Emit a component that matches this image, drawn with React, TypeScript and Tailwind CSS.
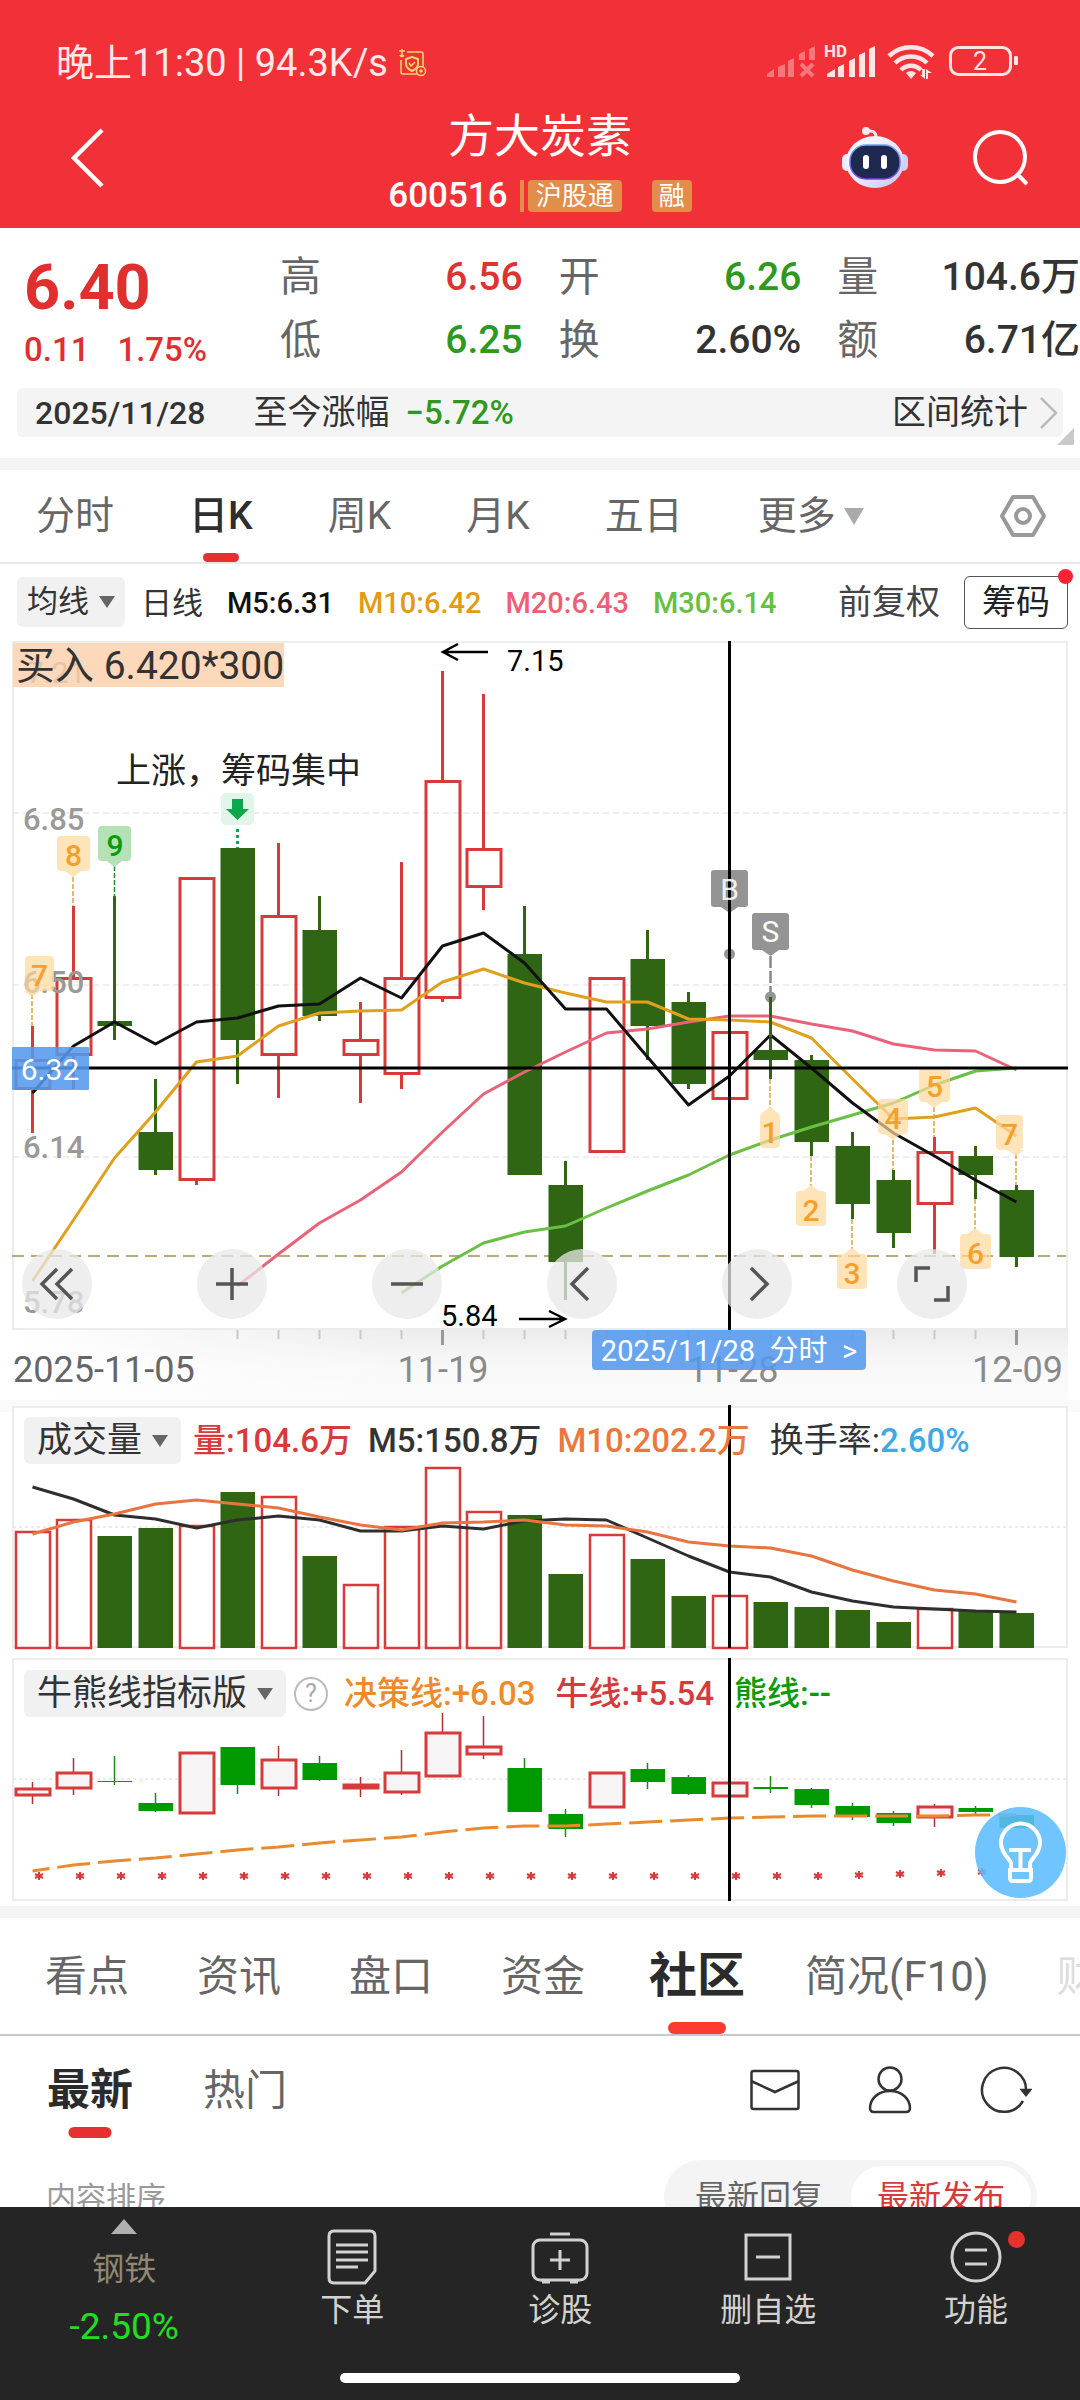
import React from "react";

const RED = "#d63a3a";
const GREEN = "#306613";
const LIME = "#009a00";

const cx = (i: number) => 32.5 + 41 * i;
const points = (ys: number[], from = 0) => ys.map((y, k) => `${cx(from + k)},${y}`).join(" ");

/* rising?, high, body top, body bottom, low */
type Candle = [boolean, number, number, number, number];

const candles: Candle[] = [
  [true, 1026, 1059, 1089, 1133],
  [true, 906, 977, 1055, 1089],
  [false, 896, 1021, 1026, 1040],
  [false, 1079, 1132, 1170, 1175],
  [true, 877, 877, 1180, 1185],
  [false, 848, 848, 1040, 1084],
  [true, 843, 915, 1055, 1098],
  [false, 896, 930, 1016, 1021],
  [true, 1002, 1039, 1055, 1103],
  [true, 862, 977, 1074, 1089],
  [true, 671, 780, 998, 1002],
  [true, 694, 848, 887, 910],
  [false, 906, 954, 1175, 1175],
  [false, 1161, 1185, 1262, 1300],
  [true, 977, 977, 1152, 1152],
  [false, 930, 959, 1026, 1060],
  [false, 992, 1002, 1084, 1089],
  [true, 954, 1031, 1099, 1103],
  [false, 997, 1050, 1060, 1079],
  [false, 1055, 1060, 1142, 1156],
  [false, 1132, 1146, 1204, 1219],
  [false, 1170, 1180, 1233, 1248],
  [true, 1137, 1151, 1204, 1254],
  [false, 1146, 1156, 1175, 1199],
  [false, 1185, 1190, 1257, 1267],
];

const ma5 = [1093, 1046, 1022, 1044, 1022, 1018, 1006, 1004, 978, 998, 946, 933, 963, 1009, 1009, 1057, 1105, 1076, 1035, 1068, 1103, 1133, 1156, 1180, 1202];
const ma10 = [1281, 1220, 1158, 1112, 1062, 1056, 1026, 1013, 1011, 1010, 982, 969, 983, 993, 1002, 1002, 1019, 1020, 1022, 1038, 1079, 1119, 1117, 1108, 1136];
const ma20 = [1286, 1254, 1223, 1200, 1172, 1132, 1094, 1072, 1052, 1033, 1029, 1022, 1016, 1016, 1024, 1031, 1044, 1050, 1051, 1070];
const ma30 = [1293, 1266, 1243, 1232, 1226, 1208, 1191, 1175, 1155, 1140, 1127, 1115, 1103, 1085, 1071, 1068];

const volumeTops = [1531, 1519, 1536, 1528, 1525, 1492, 1496, 1556, 1584, 1526, 1467, 1511, 1515, 1574, 1534, 1559, 1596, 1595, 1602, 1607, 1610, 1622, 1608, 1611, 1613];
const vol5 = [1487, 1499, 1515, 1519, 1528, 1520, 1516, 1520, 1531, 1531, 1526, 1529, 1521, 1519, 1520, 1538, 1556, 1572, 1577, 1592, 1601, 1607, 1609, 1611, 1612];
const vol10 = [1534, 1522, 1514, 1504, 1500, 1504, 1508, 1517, 1525, 1530, 1523, 1522, 1520, 1525, 1526, 1532, 1542, 1546, 1548, 1556, 1570, 1581, 1590, 1594, 1602];

const bullCandles: Candle[] = [
  [true, 1782, 1788, 1796, 1804],
  [true, 1758, 1772, 1789, 1795],
  [false, 1756, 1781, 1782, 1785],
  [false, 1793, 1803, 1811, 1812],
  [true, 1752, 1752, 1814, 1814],
  [false, 1747, 1747, 1785, 1794],
  [true, 1746, 1759, 1789, 1796],
  [false, 1756, 1763, 1780, 1781],
  [true, 1777, 1784, 1789, 1797],
  [true, 1750, 1772, 1793, 1795],
  [true, 1713, 1732, 1777, 1777],
  [true, 1716, 1746, 1755, 1759],
  [false, 1758, 1768, 1812, 1812],
  [false, 1809, 1814, 1829, 1837],
  [true, 1772, 1772, 1808, 1808],
  [false, 1763, 1769, 1782, 1789],
  [false, 1775, 1777, 1794, 1795],
  [true, 1782, 1782, 1797, 1797],
  [false, 1776, 1787, 1789, 1793],
  [false, 1788, 1789, 1805, 1808],
  [false, 1803, 1806, 1817, 1820],
  [false, 1811, 1813, 1823, 1826],
  [true, 1804, 1806, 1818, 1827],
  [false, 1806, 1808, 1812, 1815],
  [false, 1815, 1815, 1828, 1828],
];
const decision = [1871, 1865, 1861, 1858, 1854, 1850, 1847, 1843, 1840, 1837, 1832, 1828, 1826, 1826, 1824, 1822, 1820, 1818, 1817, 1816, 1816, 1816, 1816, 1815, 1815];

/* label, box x, box y, width, arrow direction, guide x, guide start, guide end */
type Tag = [string, number, number, number, "up" | "down", number, number, number];
const tags: Tag[] = [
  ["7", 25, 956, 29, "down", 32, 994, 1026],
  ["8", 57, 836, 33, "down", 73, 877, 906],
  ["1", 760, 1113, 20, "up", 770, 1079, 1108],
  ["2", 796, 1191, 30, "up", 811, 1156, 1186],
  ["3", 837, 1254, 30, "up", 852, 1219, 1249],
  ["4", 878, 1099, 30, "down", 893, 1140, 1170],
  ["5", 919, 1067, 31, "down", 934, 1107, 1137],
  ["6", 960, 1234, 31, "up", 975, 1199, 1229],
  ["7", 996, 1115, 27, "down", 1016, 1154, 1185],
];

function CountTag({ tag }: { tag: Tag }) {
  const [label, x, y, w, dir, gx, y1, y2] = tag;
  const arrow = dir === "down" ? `M${gx - 8} ${y + 35}h16l-8 6z` : `M${gx - 8} ${y}h16l-8 -6z`;
  return (
    <g>
      <line x1={gx} x2={gx} y1={y1} y2={y2} stroke="#d9a73a" strokeWidth="1.5" strokeDasharray="5 2" />
      <g fill="#ffd79b" fillOpacity="0.7">
        <rect x={x} y={y} width={w} height="35" rx="4" />
        <path d={arrow} />
      </g>
      <text x={x + w / 2} y={y + 30} fontSize="30" fontWeight="500" fill="#f5a02b" textAnchor="middle">{label}</text>
    </g>
  );
}

function PriceChart() {
  return (
    <svg viewBox="0 640 1080 760" className="w-full" role="img" aria-label="日K线图">
      <defs>
        <linearGradient id="axisShade" x1="0" x2="0" y1="0" y2="1">
          <stop offset="0" stopColor="#ececec" />
          <stop offset="0.5" stopColor="#f8f8f8" />
          <stop offset="1" stopColor="#fbfbfb" />
        </linearGradient>
        <linearGradient id="axisFade" x1="0" x2="1" y1="0" y2="0">
          <stop offset="0" stopColor="#fff" />
          <stop offset="1" stopColor="#fff" stopOpacity="0" />
        </linearGradient>
      </defs>
      <rect x="12" y="1329" width="1056" height="71" fill="url(#axisShade)" />
      <rect x="12" y="1329" width="400" height="71" fill="url(#axisFade)" />
      <rect x="13" y="642" width="1054" height="687" fill="#fff" stroke="#ececec" strokeWidth="2" />
      {[813, 985, 1157].map((y) => (
        <line key={y} x1="13" x2="1066" y1={y} y2={y} stroke="#dedede" strokeDasharray="6 4" />
      ))}
      <line x1="12" x2="1066" y1="1256" y2="1256" stroke="#bda878" strokeWidth="2" strokeDasharray="12 7" />

      {[5, 6, 7, 8, 9, 11, 12, 13, 14, 15, 16, 17, 18, 19, 20, 21, 22, 23].map((i) => (
        <line key={i} x1={cx(i)} x2={cx(i)} y1="1330" y2="1339" stroke="#c9c9c9" strokeWidth="2" />
      ))}
      {[10, 24].map((i) => (
        <line key={i} x1={cx(i)} x2={cx(i)} y1="1330" y2="1345" stroke="#999" strokeWidth="3" />
      ))}
      <g fontSize="36" fill="#8a8a8a">
        <text x="13" y="1382" fill="#666">2025-11-05</text>
        <text x="443" y="1382" textAnchor="middle">11-19</text>
        <text x="733" y="1382" textAnchor="middle">11-28</text>
        <text x="1063" y="1382" textAnchor="end">12-09</text>
      </g>

      {candles.map(([up, high, top, bottom, low], i) => {
        const x = cx(i);
        return up ? (
          <g key={i} stroke={RED} strokeWidth="3" fill="none">
            <line x1={x} x2={x} y1={high} y2={top} />
            <line x1={x} x2={x} y1={bottom} y2={low} />
            <rect x={x - 16.5} y={top + 1.5} width="34" height={bottom - top - 2} />
          </g>
        ) : (
          <g key={i} fill={GREEN}>
            <rect x={x - 1.5} y={high} width="3" height={low - high} />
            <rect x={x - 17} y={top} width="34.5" height={bottom - top} />
          </g>
        );
      })}

      <g fontSize="31" fontWeight="500" fill="#999">
        <text x="23" y="830">6.85</text>
        <text x="23" y="993">6.50</text>
        <text x="23" y="1158">6.14</text>
        <text x="23" y="1313">5.78</text>
      </g>

      <g fill="none" strokeWidth="3" strokeLinejoin="round">
        <polyline points={points(ma20, 5)} stroke="#e8637a" />
        <polyline points={points(ma30, 9)} stroke="#6abf45" />
        <polyline points={points(ma10)} stroke="#e0a01e" />
        <polyline points={points(ma5)} stroke="#111" />
      </g>

      {tags.map((t) => <CountTag key={t[0] + t[1]} tag={t} />)}
      <line x1="114.5" x2="114.5" y1="866" y2="897" stroke="#2a8a2a" strokeWidth="1.5" strokeDasharray="5 2" />
      <path d="M102 826h25a4 4 0 0 1 4 4v27a4 4 0 0 1-4 4h-5l-7.500 6-7.500-6h-5a4 4 0 0 1-4-4v-27a4 4 0 0 1 4-4z" fill="#b4e2b4" />
      <text x="115" y="856" fontSize="30" fontWeight="500" fill="#0a9a0a" textAnchor="middle">9</text>

      <rect x="221" y="793" width="33" height="32" rx="5" fill="#e1f5e9" />
      <path d="M232 799h11v10h6l-11.500 11-11.500-11h6z" fill="#0aa84a" />
      <line x1="237.500" x2="237.500" y1="829" y2="848" stroke="#0aa84a" strokeWidth="3" strokeDasharray="3 3" />
      <text x="116" y="783" fontSize="35" fill="#222">上涨，筹码集中</text>

      <rect x="13" y="643" width="271" height="44" fill="#fdd8bb" />
      <text x="27" y="683" fontSize="30" fill="#e6c3a8">7.21</text>
      <text x="16" y="679" fontSize="39" fill="#333">买入 6.420*300</text>

      <g stroke="#000" strokeWidth="2.500" fill="none">
        <path d="M488 652H443M458 644l-15 8 15 8" />
        <path d="M519 1319h46M549 1311l16 8-16 8" />
      </g>
      <g fontSize="29" fill="#000">
        <text x="507" y="671">7.15</text>
        <text x="441" y="1326">5.84</text>
      </g>

      <g fill="#949494">
        <rect x="711" y="870" width="37" height="37" rx="3" />
        <path d="M721 907h17l-8.500 6z" />
        <circle cx="729.500" cy="954" r="5.500" />
        <rect x="752" y="913" width="37" height="37" rx="3" />
        <path d="M762 950h17l-8.500 6z" />
        <circle cx="770.500" cy="997" r="5.500" />
      </g>
      <line x1="770.500" x2="770.500" y1="956" y2="992" stroke="#888" strokeWidth="2.500" strokeDasharray="12 3" />
      <rect x="769" y="997" width="3" height="40" fill={GREEN} />
      <text x="770.500" y="942" fontSize="30" fill="#fff" textAnchor="middle">S</text>

      <line x1="12" x2="1068" y1="1068" y2="1068" stroke="#000" strokeWidth="3" />
      <line x1="729.500" x2="729.500" y1="641" y2="1330" stroke="#000" strokeWidth="3" />
      <text x="729.500" y="900" fontSize="30" fill="#fff" fillOpacity="0.9" textAnchor="middle">B</text>

      <rect x="12" y="1047" width="77" height="43" rx="1" fill="#5499ee" fillOpacity="0.87" />
      <text x="50" y="1080" fontSize="30" fill="#fff" textAnchor="middle">6.32</text>
    </svg>
  );
}

function VolumeChart() {
  return (
    <svg viewBox="0 1400 1080 250" className="col-start-1 row-start-1 w-full" role="img" aria-label="成交量图">
      <rect width="1080" y="1400" height="12" fill="#fafafa" />
      <rect x="13" y="1407" width="1054" height="240" fill="#fff" stroke="#ececec" strokeWidth="2" />
      <line x1="13" x2="1066" y1="1527" y2="1527" stroke="#d8d8d8" strokeDasharray="3 3" />
      {volumeTops.map((top, i) => {
        const x = cx(i);
        return candles[i][0] ? (
          <rect key={i} x={x - 16.5} y={top + 1} width="34" height={1647 - top} fill="#fff" stroke={RED} strokeWidth="2.500" />
        ) : (
          <rect key={i} x={x - 17} y={top} width="34.500" height={1648 - top} fill={GREEN} />
        );
      })}
      <g fill="none" strokeWidth="3" strokeLinejoin="round">
        <polyline points={points(vol5)} stroke="#2e2e2e" />
        <polyline points={points(vol10)} stroke="#e97440" />
      </g>
      <line x1="729.500" x2="729.500" y1="1405" y2="1648" stroke="#000" strokeWidth="3" />
    </svg>
  );
}

function BullBearChart() {
  return (
    <svg viewBox="0 1650 1080 256" className="col-start-1 row-start-1 w-full" role="img" aria-label="牛熊线指标图">
      <rect x="13" y="1659" width="1054" height="241" fill="#fff" stroke="#ececec" strokeWidth="2" />
      <line x1="13" x2="1066" y1="1779" y2="1779" stroke="#d8d8d8" strokeDasharray="3 3" />
      {bullCandles.map(([up, high, top, bottom, low], i) => {
        const x = cx(i);
        return (
          <g key={i}>
            <line x1={x} x2={x} y1={high} y2={low} stroke={up ? "#b03030" : "#1b8a1b"} strokeWidth="1.500" />
            {up ? (
              <rect x={x - 16.5} y={top + 1} width="34" height={Math.max(bottom - top - 2, 2)} fill="#f6f4f4" stroke={RED} strokeWidth="3" />
            ) : (
              <rect x={x - 17} y={top} width="34.500" height={bottom - top} fill={LIME} />
            )}
          </g>
        );
      })}
      <polyline points={points(decision)} fill="none" stroke="#ea8a2c" strokeWidth="3" strokeDasharray="33 8" strokeDashoffset="16" />
      {bullCandles.slice(0, 24).map((_, i) => {
        const x = 39 + 41 * i;
        const y = i < 20 ? 1876 : 1895 - i;
        return <path key={i} d={`M${x} ${y - 4}v8M${x - 4} ${y - 2}l8 4M${x - 4} ${y + 2}l8 -4`} stroke="#d63a3a" strokeWidth="2" />;
      })}
      <line x1="729.500" x2="729.500" y1="1658" y2="1901" stroke="#000" strokeWidth="3" />
    </svg>
  );
}

function StatusIcons() {
  return (
    <svg viewBox="765 44 257 42" className="h-[42px] w-[257px]" fill="#ffe4e4" aria-label="信号与电量">
      <g opacity="0.4">
        <path d="M767 76l7-5v8h-7zM778 69l7-3v13h-7zM788 63l6-3v19h-6zM799 56l6-3v9h-6zM809 51l6-3v14h-6z" />
        <path d="M801 66l12 12M813 66l-12 12" stroke="#ffe4e4" strokeWidth="4" />
      </g>
      <text x="824" y="59" fontSize="17" fontWeight="700">HD</text>
      <path d="M827 76l8-5v8h-8zM838 69l6-3v13h-6zM849 63l6-3v19h-6zM859 57l6-3v25h-6zM869 51l6-3v31h-6z" />
      <g fill="none" stroke="#ffe4e4" strokeWidth="4.500">
        <path d="M889 58a32 32 0 0 1 44 0" />
        <path d="M895 65a23 23 0 0 1 32 0" />
        <path d="M901 72a14 14 0 0 1 20 0" />
      </g>
      <path d="M906 75q5-4 10 0l-5 6z" />
      <path d="M922 71h3v10l-5-4h2zM928 81h-2v-10l6 4h-4z" />
      <rect x="950.500" y="49.500" width="60" height="27" rx="8" fill="none" stroke="#ffe4e4" strokeWidth="3" />
      <rect x="1014" y="58" width="4" height="9" rx="1" />
      <text x="980" y="72" fontSize="25" textAnchor="middle">2</text>
    </svg>
  );
}

function RobotIcon() {
  return (
    <svg viewBox="0 0 66 62" className="h-[62px] w-[66px]">
      <defs>
        <linearGradient id="shell" x1="0" y1="0" x2="1" y2="1">
          <stop offset="0" stopColor="#fff" />
          <stop offset="0.6" stopColor="#e6e4fb" />
          <stop offset="1" stopColor="#bfc2f0" />
        </linearGradient>
        <linearGradient id="visor" x1="0" y1="0" x2="0" y2="1">
          <stop offset="0" stopColor="#6fa8f0" />
          <stop offset="1" stopColor="#7a3fe0" />
        </linearGradient>
      </defs>
      <path d="M23 4q12-2 11 8" fill="none" stroke="#f3e9f8" strokeWidth="3" />
      <circle cx="24" cy="4" r="4" fill="#f7e6f4" />
      <rect x="0" y="27" width="10" height="17" rx="5" fill="#eceafc" />
      <rect x="56" y="27" width="10" height="17" rx="5" fill="#cfd0f5" />
      <ellipse cx="33" cy="35" rx="29" ry="26" fill="url(#shell)" />
      <rect x="8" y="18" width="50" height="34" rx="16" fill="#1f2950" stroke="url(#visor)" strokeWidth="1.500" />
      <rect x="21" y="28" width="6" height="14" rx="3" fill="#fff" />
      <rect x="39" y="28" width="6" height="14" rx="3" fill="#fff" />
    </svg>
  );
}

const Caret = ({ className = "" }: { className?: string }) => (
  <svg viewBox="0 0 16 12" className={`h-3 w-4 ${className}`}>
    <path d="M0 0h16l-8 12z" fill="currentColor" />
  </svg>
);

function Header() {
  return (
    <header className="bg-[#f23037] pt-[38px] text-white">
      <div className="flex h-[50px] items-center justify-between pr-[58px] pl-14 text-[#ffe9e9]">
        <div className="flex items-center gap-[10px] text-[38px] leading-[50px] whitespace-nowrap">
          <span>晚上11:30 | 94.3K/s</span>
          <svg viewBox="0 0 30 30" className="h-[30px] w-[30px]" fill="none" stroke="#f5d76a" strokeWidth="1.500">
            <path d="M9 4h14q2 0 2 2v13M3 12v12q0 2 2 2h14M4 1v7M1 3h6M2 7q2 3 4 0" />
            <path d="M8 11l6-2 6 2v5q0 4-6 7-6-3-6-7z" strokeWidth="2" />
            <path d="M11 15l2 3 4-4" />
            <circle cx="23" cy="23" r="4.500" />
            <circle cx="23" cy="23" r="1" />
          </svg>
        </div>
        <StatusIcons />
      </div>
      <div className="grid h-[140px] grid-cols-[1fr_auto_1fr] items-center">
        <button className="ml-[68px] h-[62px] w-[40px]" aria-label="返回">
          <svg viewBox="0 0 40 62" className="h-full w-full" fill="none" stroke="#fff" strokeWidth="4.500">
            <path d="M34 3L6 31l28 28" />
          </svg>
        </button>
        <div className="flex flex-col items-center pt-3">
          <h1 className="text-[46px] leading-[64px]">方大炭素</h1>
          <div className="flex h-[56px] items-center text-[35px] font-medium">
            <span>600516</span>
            <span className="ml-3 h-8 w-1 bg-[#e38d4a]" />
            <span className="ml-1 rounded-sm bg-[#e38d4a] px-2 text-[26px] leading-8 font-normal">沪股通</span>
            <span className="ml-[30px] rounded-sm bg-[#e38d4a] px-[7px] text-[26px] leading-8 font-normal">融</span>
          </div>
        </div>
        <div className="flex items-center justify-end gap-16 pr-[50px]">
          <button aria-label="智能助手"><RobotIcon /></button>
          <button aria-label="搜索">
            <svg viewBox="0 0 58 58" className="h-[58px] w-[58px]" fill="none" stroke="#fff" strokeWidth="4">
              <circle cx="28" cy="28" r="25" />
              <path d="M46 46l9 9" />
            </svg>
          </button>
        </div>
      </div>
    </header>
  );
}

function Stat({ label, value, tone }: { label: string; value: string; tone: string }) {
  return (
    <div className="flex items-center justify-between leading-[63px] whitespace-nowrap">
      <dt className="text-[41px] text-[#666]">{label}</dt>
      <dd className={`text-[39px] font-medium ${tone}`}>{value}</dd>
    </div>
  );
}

function Quote() {
  return (
    <section className="pt-[18px]">
      <div className="flex h-[142px] pl-6">
        <div className="w-[256px] shrink-0 text-[#e02f2f]">
          <div className="pt-1 text-[63px] leading-[76px] font-bold">6.40</div>
          <div className="flex gap-7 text-[33px] leading-[48px] font-medium">
            <span>0.11</span>
            <span>1.75%</span>
          </div>
        </div>
        <dl className="grid flex-1 grid-cols-3 gap-x-9 self-start">
          <Stat label="高" value="6.56" tone="text-[#dd3333]" />
          <Stat label="开" value="6.26" tone="text-[#2e981f]" />
          <Stat label="量" value="104.6万" tone="text-[#333]" />
          <Stat label="低" value="6.25" tone="text-[#2e981f]" />
          <Stat label="换" value="2.60%" tone="text-[#333]" />
          <Stat label="额" value="6.71亿" tone="text-[#333]" />
        </dl>
      </div>
      <div className="relative mr-[17px] ml-[17px] flex h-[49px] items-center rounded-md bg-[#f4f4f4] pr-[5px] pl-[18px] text-[#333]">
        <span className="text-[32px] font-medium">2025/11/28</span>
        <span className="ml-[48px] text-[34px]">至今涨幅</span>
        <span className="ml-4 text-[33px] font-medium text-[#2e981f]">−5.72%</span>
        <button className="ml-auto flex items-center gap-3 text-[34px]">
          区间统计
          <svg viewBox="0 0 18 34" className="h-[34px] w-[18px]" fill="none" stroke="#bbb" strokeWidth="2.500">
            <path d="M1 2l15 15L1 32" />
          </svg>
        </button>
        <svg viewBox="0 0 17 17" className="absolute -right-[11px] -bottom-2 h-[17px] w-[17px]">
          <path d="M17 0v17H0z" fill="#c9c9c9" />
        </svg>
      </div>
      <div className="mt-[21px] h-3 bg-[#f4f4f4]" />
    </section>
  );
}

function PeriodTabs() {
  const items = ["分时", "日K", "周K", "月K", "五日"];
  return (
    <nav className="flex h-[94px] items-center border-b-2 border-[#e8e8e8] pr-[34px] pl-9 text-[39px] text-[#666]">
      <div className="flex h-full gap-[75px]">
        {items.map((t) => (
          <button key={t} className={t === "日K" ? "relative font-medium text-[#2e2e2e]" : ""}>
            {t}
            {t === "日K" && <span className="absolute bottom-0 left-1/2 h-[9px] w-9 -translate-x-1/2 rounded-full bg-[#e62f2f]" />}
          </button>
        ))}
        <button className="flex items-center gap-2">
          更多
          <svg viewBox="0 0 20 17" className="h-[17px] w-5"><path d="M0 0h20l-10 17z" fill="#aaa" /></svg>
        </button>
      </div>
      <button className="ml-auto" aria-label="设置">
        <svg viewBox="0 0 46 44" className="h-[44px] w-[46px]" fill="none" stroke="#999" strokeWidth="4">
          <path d="M13 3h20l11 19-11 19H13L2 22z" strokeLinejoin="round" />
          <circle cx="23" cy="22" r="7" />
        </svg>
      </button>
    </nav>
  );
}

function MaBar() {
  return (
    <div className="flex h-[76px] items-center pr-3 pl-[17px] text-[29px] font-medium whitespace-nowrap">
      <button className="flex h-[50px] items-center gap-[10px] rounded-md bg-[#f1f1f1] px-[10px] text-[31px] font-normal text-[#333]">
        均线 <Caret className="text-[#666]" />
      </button>
      <span className="ml-4 pt-1 text-[31px] font-normal text-[#333]">日线</span>
      <span className="ml-6 pt-1 text-[#111]">M5:6.31</span>
      <span className="ml-6 pt-1 text-[#e39c12]">M10:6.42</span>
      <span className="ml-6 pt-1 text-[#ec5f75]">M20:6.43</span>
      <span className="ml-6 pt-1 text-[#65bf40]">M30:6.14</span>
      <button className="ml-auto text-[34px] font-normal text-[#444]">前复权</button>
      <button className="relative ml-6 h-[53px] rounded-md border border-[#555] px-[17px] text-[34px] font-normal text-[#222]">
        筹码
        <span className="absolute -top-2 -right-[6px] h-[15px] w-[15px] rounded-full bg-[#fb2334]" />
      </button>
    </div>
  );
}

function ChartControls() {
  const icons: [string, string][] = [
    ["收起", "M18 3L3 18l15 15M33 3L18 18l15 15"],
    ["放大", "M18 2v32M2 18h32"],
    ["缩小", "M2 18h32"],
    ["左移", "M24 2L8 18l16 16"],
    ["右移", "M12 2l16 16-16 16"],
    ["全屏", "M2 16V2h14M34 20v14H20"],
  ];
  return (
    <div className="absolute right-[10.5%] bottom-[81px] left-[2%] flex justify-between">
      {icons.map(([label, d]) => (
        <button key={label} aria-label={label} className="flex h-[70px] w-[70px] items-center justify-center rounded-full bg-[#e8e8e8]/75">
          <svg viewBox="0 0 36 36" className="h-9 w-9" fill="none" stroke="#555" strokeWidth="3.500">
            <path d={d} />
          </svg>
        </button>
      ))}
    </div>
  );
}

function Charts() {
  return (
    <section>
      <div className="relative">
        <PriceChart />
        <ChartControls />
        <button className="absolute bottom-[30px] left-[54.8%] h-10 rounded-sm bg-[#5499ee]/87 px-[9px] text-[29px] whitespace-pre text-white">
          2025/11/28  分时  &gt;
        </button>
      </div>
      <div className="grid">
        <VolumeChart />
        <div className="z-10 col-start-1 row-start-1 flex items-center self-start pt-[17px] pl-6 text-[33px] leading-[47px] font-medium whitespace-nowrap">
          <button className="flex items-center gap-[10px] rounded-md bg-[#f1f1f1] px-[13px] text-[35px] font-normal text-[#333]">
            成交量 <Caret className="text-[#666]" />
          </button>
          <span className="ml-3 text-[#d63a3a]">量:104.6万</span>
          <span className="ml-4 text-[#333]">M5:150.8万</span>
          <span className="ml-4 text-[#ec773e]">M10:202.2万</span>
          <span className="ml-5 text-[34px] font-normal text-[#333]">换手率:</span>
          <span className="text-[#40a9e4]">2.60%</span>
        </div>
      </div>
      <div className="relative grid">
        <BullBearChart />
        <div className="z-10 col-start-1 row-start-1 flex items-center self-start pt-5 pl-6 text-[33px] leading-[47px] font-medium whitespace-nowrap">
          <button className="flex items-center gap-[10px] rounded-md bg-[#f1f1f1] px-[13px] text-[35px] font-normal text-[#333]">
            牛熊线指标版 <Caret className="text-[#666]" />
          </button>
          <button className="ml-2 h-[34px] w-[34px] rounded-full border-2 border-[#bbb] text-[25px] leading-[30px] font-normal text-[#aaa]">?</button>
          <span className="ml-4 text-[#ee8a2a]">决策线:+6.03</span>
          <span className="ml-5 text-[#d63a3a]">牛线:+5.54</span>
          <span className="ml-5 text-[#0a9a0a]">熊线:--</span>
        </div>
        <button aria-label="提示" className="absolute right-[14px] bottom-2 z-10 h-[91px] w-[91px] rounded-full bg-[#5cbcff]/88">
          <svg viewBox="0 0 91 91" className="h-full w-full" fill="none" stroke="#fff" strokeWidth="4">
            <path d="M36 63V56C34 51 26 46 26 36a19.500 19.500 0 0 1 39 0c0 10-8 15-10 20v7" />
            <path d="M34 43h22M45.500 43v20M35 63h21v8q0 3-3 3H38q-3 0-3-3z" />
          </svg>
        </button>
      </div>
      <div className="h-3 bg-[#f4f4f4]" />
    </section>
  );
}

function Community() {
  const tabs = ["看点", "资讯", "盘口", "资金", "社区", "简况(F10)", "财务"];
  return (
    <section>
      <nav className="flex h-[118px] items-stretch gap-[68px] overflow-hidden border-b-2 border-[#c8c8c8] pl-[45px] text-[42px] whitespace-nowrap text-[#666]">
        {tabs.map((t) =>
          t === "社区" ? (
            <button key={t} className="relative -mr-2 -ml-1 shrink-0 text-[48px] font-bold text-[#2b2b2b]">
              {t}
              <span className="absolute bottom-0 left-1/2 h-3 w-[58px] -translate-x-1/2 rounded-full bg-[#fd3a30]" />
            </button>
          ) : (
            <button key={t} className={t === "财务" ? "shrink-0 text-[#ddd]" : "shrink-0"}>{t}</button>
          )
        )}
      </nav>
      <div className="flex h-[108px] items-center pr-[48px] pl-[47px] text-[43px]">
        <div className="flex h-full gap-[70px]">
          <button className="relative font-bold text-[#2b2b2b]">
            最新
            <span className="absolute bottom-[6px] left-1/2 h-[11px] w-[43px] -translate-x-1/2 rounded-full bg-[#e62f2f]" />
          </button>
          <button className="text-[42px] text-[#666]">热门</button>
        </div>
        <div className="ml-auto flex items-center gap-[68px] text-[#333]">
          <button aria-label="消息">
            <svg viewBox="0 0 50 42" className="h-[42px] w-[50px]" fill="none" stroke="currentColor" strokeWidth="2.500">
              <rect x="1.500" y="2" width="47" height="38" rx="2" />
              <path d="M1 12l24 11 24-11" />
            </svg>
          </button>
          <button aria-label="我的">
            <svg viewBox="0 0 44 48" className="h-12 w-[44px]" fill="none" stroke="currentColor" strokeWidth="2.500">
              <circle cx="22" cy="13" r="11.500" />
              <path d="M22 25c-13 0-20 9-20 17 0 3 2 4 4 4h32c2 0 4-1 4-4 0-8-7-17-20-17z" />
            </svg>
          </button>
          <button aria-label="刷新">
            <svg viewBox="0 0 52 48" className="h-12 w-[52px]" fill="none" stroke="currentColor" strokeWidth="2.500">
              <path d="M43 35A22 22 0 1 1 46 25" />
              <path d="M42 24h8l-4 5z" fill="currentColor" />
            </svg>
          </button>
        </div>
      </div>
      <div className="flex items-center justify-between pt-4 pr-[43px] pl-[46px]">
        <span className="text-[30px] text-[#999]">内容排序</span>
        <div className="flex rounded-full bg-[#f4f4f4] p-[6px] text-[32px] leading-[62px]">
          <button className="pr-7 pl-[25px] text-[#666]">最新回复</button>
          <button className="rounded-full bg-white px-[26px] text-[#d63a3a]">最新发布</button>
        </div>
      </div>
    </section>
  );
}

function NavItem({ label, dot, children }: { label: string; dot?: boolean; children: React.ReactNode }) {
  return (
    <button className="flex flex-1 flex-col items-center pt-5 text-[32px] leading-[46px] text-[#d2d2d2]">
      <span className="relative">
        <svg viewBox="0 0 60 60" className="h-[60px] w-[60px]" fill="none" stroke="#d2d2d2" strokeWidth="3">{children}</svg>
        {dot && <span className="absolute top-1 -right-[19px] h-[17px] w-[17px] rounded-full bg-[#e8302f]" />}
      </span>
      {label}
    </button>
  );
}

function BottomNav() {
  return (
    <footer className="fixed inset-x-0 bottom-0 z-20 bg-[#252525]">
      <div className="flex h-[166px]">
        <button className="flex w-[23%] flex-col items-center pt-3">
          <svg viewBox="0 0 26 15" className="h-[15px] w-[26px]"><path d="M13 0l13 15H0z" fill="#b0b0b0" /></svg>
          <span className="mt-3 text-[32px] leading-[46px] text-[#918873]">钢铁</span>
          <span className="mt-3 text-[37px] leading-[46px] text-[#1fe01f]">-2.50%</span>
        </button>
        <NavItem label="下单">
          <path d="M12 4h36q5 0 5 5v35l-10 12H12q-5 0-5-5V9q0-5 5-5z" />
          <path d="M14 18h32M14 25h32M14 33h32M14 40h22" />
        </NavItem>
        <NavItem label="诊股">
          <rect x="3" y="13" width="54" height="40" rx="7" />
          <path d="M20 7h20M30 23v20M20 33h20M12 55h8M40 55h8" />
        </NavItem>
        <NavItem label="删自选">
          <rect x="8" y="8" width="44" height="44" />
          <path d="M18 30h24" />
        </NavItem>
        <NavItem label="功能" dot>
          <circle cx="30" cy="30" r="24" />
          <path d="M19 23h22M19 37h22" />
        </NavItem>
      </div>
      <div className="pb-[17px]">
        <div className="mx-auto h-[10px] w-[37%] rounded-full bg-white" />
      </div>
    </footer>
  );
}

export default function App() {
  return (
    <div className="bg-white pb-20 font-[Roboto,'Noto_Sans_CJK_SC',sans-serif] text-[#333]">
      <Header />
      <main>
        <Quote />
        <PeriodTabs />
        <MaBar />
        <Charts />
        <Community />
      </main>
      <BottomNav />
    </div>
  );
}
